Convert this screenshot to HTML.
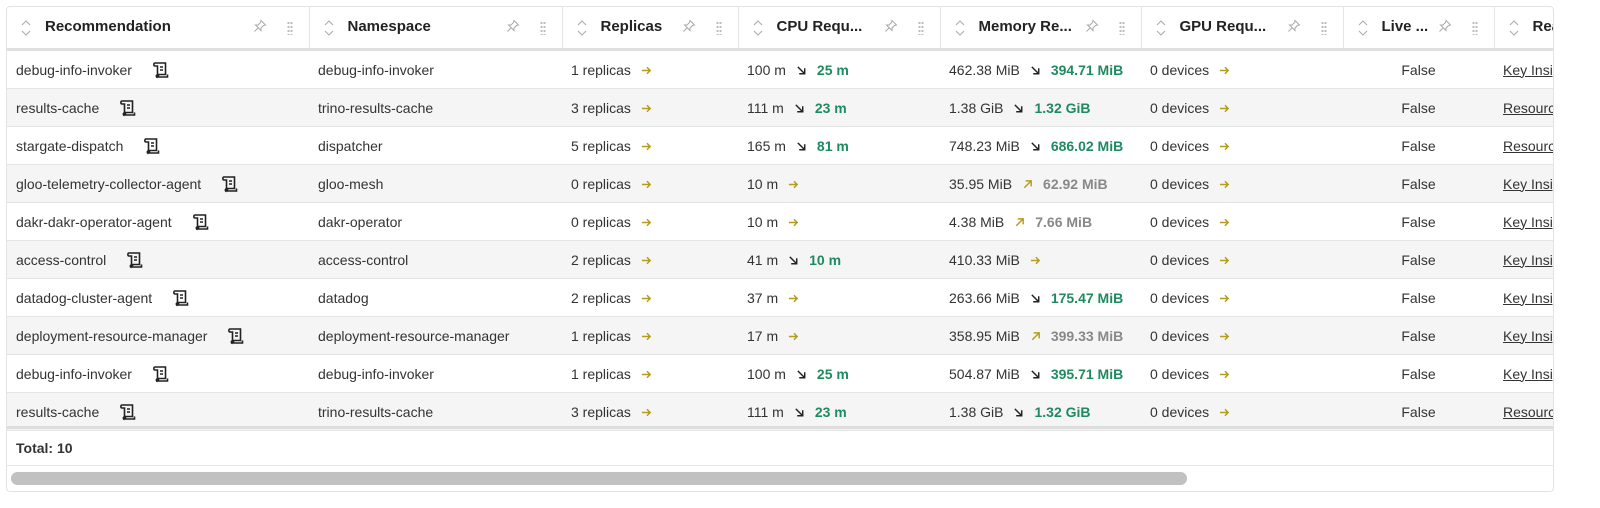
<!DOCTYPE html>
<html><head><style>
body{margin:0;background:#fff;font-family:"Liberation Sans",sans-serif;font-size:14px;color:#333;width:1600px;height:508px;overflow:hidden;position:relative}
.box{position:absolute;left:6px;top:6px;width:1546px;height:484px;border:1px solid #e3e3e3;border-radius:4px;overflow:hidden;background:#fff}
table{border-collapse:collapse;table-layout:fixed;position:absolute;left:0;top:0;width:1600px}
th{height:41px;text-align:left;font-weight:bold;font-size:15px;color:#222;border-right:1px solid #e6e6e6;border-bottom:3px solid #e0e0e0;padding:0 0 0 14px;white-space:nowrap;overflow:hidden;position:relative}
th .s{display:inline-block;width:10px;height:18px;vertical-align:middle;margin-right:14px}
th .pin{position:absolute;top:12px}
th .dots{position:absolute;top:14px;width:6px;height:14px;background:radial-gradient(circle,#bbb 1px,transparent 1.3px) 0 0/3px 4px}
td{height:37px;border-bottom:1px solid #e4e4e4;padding:0 0 0 9px;white-space:nowrap;overflow:hidden}
tr.g td{background:#f5f5f5}
svg.ar{vertical-align:-1px;margin:0 10px}
.gr{color:#1f8a62;font-weight:bold}
.gy{color:#888;font-weight:bold}
svg.ic{vertical-align:-4px;margin-left:20px}
.lv{text-align:center;padding:0}
.rs{text-decoration:underline;color:#333}
.tot{position:absolute;left:0;top:419px;width:1546px;height:40px;border-top:3px solid #ddd;border-bottom:1px solid #e6e6e6;font-weight:bold;font-size:14px;line-height:38px;padding-left:9px;color:#333;box-sizing:border-box}
.sb{position:absolute;left:4px;top:465px;width:1176px;height:13px;background:#c1c1c1;border-radius:7px}
</style></head><body>
<svg width="0" height="0" style="position:absolute">
<defs>
<symbol id="r" viewBox="0 0 12 12"><path d="M1 6H10M6.5 2.5L10 6L6.5 9.5" fill="none" stroke="#b59b1f" stroke-width="1.6"/></symbol>
<symbol id="dn" viewBox="0 0 12 12"><path d="M2 2L9.5 9.5M9.5 3.5V9.5H3.5" fill="none" stroke="#222" stroke-width="1.6"/></symbol>
<symbol id="up" viewBox="0 0 12 12"><path d="M2.5 9.5L10 2M4 2H10V8" fill="none" stroke="#b59b1f" stroke-width="1.6"/></symbol>
<symbol id="sc" viewBox="0 0 18 18"><path d="M3 2H13.5V13.5H6.5V16H15.5V13.5M3 2C1.5 2 1.5 5 3 5H5.5V16.5M5.5 16.5C4.2 16.5 4 14.5 5 14M8 6H11M8 9H11" fill="none" stroke="#222" stroke-width="1.6"/></symbol>
<symbol id="so" viewBox="0 0 10 18"><path d="M1 6L5 2L9 6M1 12L5 16L9 12" fill="none" stroke="#aaa" stroke-width="1"/></symbol>
<symbol id="pn" viewBox="0 0 14 14"><path d="M8 1.5L12.5 6L10.5 6.5L8 9L8 11.5L2.5 6H5L7.5 3.5ZM5 9L1.5 12.5" fill="none" stroke="#aaa" stroke-width="1"/></symbol>
</defs></svg>
<div class="box">
<table>
<colgroup><col style="width:302px"><col style="width:253px"><col style="width:176px"><col style="width:202px"><col style="width:201px"><col style="width:202px"><col style="width:151px"><col style="width:113px"></colgroup>
<tr>
<th><svg class="s"><use href="#so"/></svg>Recommendation<svg class="pin" width="14" height="14" style="left:246px"><use href="#pn"/></svg><span class="dots" style="left:280px"></span></th>
<th><svg class="s"><use href="#so"/></svg>Namespace<svg class="pin" width="14" height="14" style="left:196px"><use href="#pn"/></svg><span class="dots" style="left:230px"></span></th>
<th><svg class="s"><use href="#so"/></svg>Replicas<svg class="pin" width="14" height="14" style="left:119px"><use href="#pn"/></svg><span class="dots" style="left:153px"></span></th>
<th><svg class="s"><use href="#so"/></svg>CPU Requ...<svg class="pin" width="14" height="14" style="left:145px"><use href="#pn"/></svg><span class="dots" style="left:179px"></span></th>
<th><svg class="s"><use href="#so"/></svg>Memory Re...<svg class="pin" width="14" height="14" style="left:144px"><use href="#pn"/></svg><span class="dots" style="left:178px"></span></th>
<th><svg class="s"><use href="#so"/></svg>GPU Requ...<svg class="pin" width="14" height="14" style="left:145px"><use href="#pn"/></svg><span class="dots" style="left:179px"></span></th>
<th><svg class="s"><use href="#so"/></svg>Live ...<svg class="pin" width="14" height="14" style="left:94px"><use href="#pn"/></svg><span class="dots" style="left:128px"></span></th>
<th><svg class="s"><use href="#so"/></svg>Rea</th>
</tr>
<tr><td>debug-info-invoker<svg class="ic" width="18" height="18"><use href="#sc"/></svg></td><td>debug-info-invoker</td><td>1 replicas<svg class="ar" width="11" height="11"><use href="#r"/></svg></td><td>100 m<svg class="ar" width="11" height="11"><use href="#dn"/></svg><span class="gr">25 m</span></td><td>462.38 MiB<svg class="ar" width="11" height="11"><use href="#dn"/></svg><span class="gr">394.71 MiB</span></td><td>0 devices<svg class="ar" width="11" height="11"><use href="#r"/></svg></td><td class="lv">False</td><td><span class="rs">Key Insights</span></td></tr>
<tr class="g"><td>results-cache<svg class="ic" width="18" height="18"><use href="#sc"/></svg></td><td>trino-results-cache</td><td>3 replicas<svg class="ar" width="11" height="11"><use href="#r"/></svg></td><td>111 m<svg class="ar" width="11" height="11"><use href="#dn"/></svg><span class="gr">23 m</span></td><td>1.38 GiB<svg class="ar" width="11" height="11"><use href="#dn"/></svg><span class="gr">1.32 GiB</span></td><td>0 devices<svg class="ar" width="11" height="11"><use href="#r"/></svg></td><td class="lv">False</td><td><span class="rs">Resources</span></td></tr>
<tr><td>stargate-dispatch<svg class="ic" width="18" height="18"><use href="#sc"/></svg></td><td>dispatcher</td><td>5 replicas<svg class="ar" width="11" height="11"><use href="#r"/></svg></td><td>165 m<svg class="ar" width="11" height="11"><use href="#dn"/></svg><span class="gr">81 m</span></td><td>748.23 MiB<svg class="ar" width="11" height="11"><use href="#dn"/></svg><span class="gr">686.02 MiB</span></td><td>0 devices<svg class="ar" width="11" height="11"><use href="#r"/></svg></td><td class="lv">False</td><td><span class="rs">Resources</span></td></tr>
<tr class="g"><td>gloo-telemetry-collector-agent<svg class="ic" width="18" height="18"><use href="#sc"/></svg></td><td>gloo-mesh</td><td>0 replicas<svg class="ar" width="11" height="11"><use href="#r"/></svg></td><td>10 m<svg class="ar" width="11" height="11"><use href="#r"/></svg></td><td>35.95 MiB<svg class="ar" width="11" height="11"><use href="#up"/></svg><span class="gy">62.92 MiB</span></td><td>0 devices<svg class="ar" width="11" height="11"><use href="#r"/></svg></td><td class="lv">False</td><td><span class="rs">Key Insights</span></td></tr>
<tr><td>dakr-dakr-operator-agent<svg class="ic" width="18" height="18"><use href="#sc"/></svg></td><td>dakr-operator</td><td>0 replicas<svg class="ar" width="11" height="11"><use href="#r"/></svg></td><td>10 m<svg class="ar" width="11" height="11"><use href="#r"/></svg></td><td>4.38 MiB<svg class="ar" width="11" height="11"><use href="#up"/></svg><span class="gy">7.66 MiB</span></td><td>0 devices<svg class="ar" width="11" height="11"><use href="#r"/></svg></td><td class="lv">False</td><td><span class="rs">Key Insights</span></td></tr>
<tr class="g"><td>access-control<svg class="ic" width="18" height="18"><use href="#sc"/></svg></td><td>access-control</td><td>2 replicas<svg class="ar" width="11" height="11"><use href="#r"/></svg></td><td>41 m<svg class="ar" width="11" height="11"><use href="#dn"/></svg><span class="gr">10 m</span></td><td>410.33 MiB<svg class="ar" width="11" height="11"><use href="#r"/></svg></td><td>0 devices<svg class="ar" width="11" height="11"><use href="#r"/></svg></td><td class="lv">False</td><td><span class="rs">Key Insights</span></td></tr>
<tr><td>datadog-cluster-agent<svg class="ic" width="18" height="18"><use href="#sc"/></svg></td><td>datadog</td><td>2 replicas<svg class="ar" width="11" height="11"><use href="#r"/></svg></td><td>37 m<svg class="ar" width="11" height="11"><use href="#r"/></svg></td><td>263.66 MiB<svg class="ar" width="11" height="11"><use href="#dn"/></svg><span class="gr">175.47 MiB</span></td><td>0 devices<svg class="ar" width="11" height="11"><use href="#r"/></svg></td><td class="lv">False</td><td><span class="rs">Key Insights</span></td></tr>
<tr class="g"><td>deployment-resource-manager<svg class="ic" width="18" height="18"><use href="#sc"/></svg></td><td>deployment-resource-manager</td><td>1 replicas<svg class="ar" width="11" height="11"><use href="#r"/></svg></td><td>17 m<svg class="ar" width="11" height="11"><use href="#r"/></svg></td><td>358.95 MiB<svg class="ar" width="11" height="11"><use href="#up"/></svg><span class="gy">399.33 MiB</span></td><td>0 devices<svg class="ar" width="11" height="11"><use href="#r"/></svg></td><td class="lv">False</td><td><span class="rs">Key Insights</span></td></tr>
<tr><td>debug-info-invoker<svg class="ic" width="18" height="18"><use href="#sc"/></svg></td><td>debug-info-invoker</td><td>1 replicas<svg class="ar" width="11" height="11"><use href="#r"/></svg></td><td>100 m<svg class="ar" width="11" height="11"><use href="#dn"/></svg><span class="gr">25 m</span></td><td>504.87 MiB<svg class="ar" width="11" height="11"><use href="#dn"/></svg><span class="gr">395.71 MiB</span></td><td>0 devices<svg class="ar" width="11" height="11"><use href="#r"/></svg></td><td class="lv">False</td><td><span class="rs">Key Insights</span></td></tr>
<tr class="g"><td>results-cache<svg class="ic" width="18" height="18"><use href="#sc"/></svg></td><td>trino-results-cache</td><td>3 replicas<svg class="ar" width="11" height="11"><use href="#r"/></svg></td><td>111 m<svg class="ar" width="11" height="11"><use href="#dn"/></svg><span class="gr">23 m</span></td><td>1.38 GiB<svg class="ar" width="11" height="11"><use href="#dn"/></svg><span class="gr">1.32 GiB</span></td><td>0 devices<svg class="ar" width="11" height="11"><use href="#r"/></svg></td><td class="lv">False</td><td><span class="rs">Resources</span></td></tr>
</table>
<div class="tot">Total: 10</div>
<div class="sb"></div>
</div>
</body></html>
